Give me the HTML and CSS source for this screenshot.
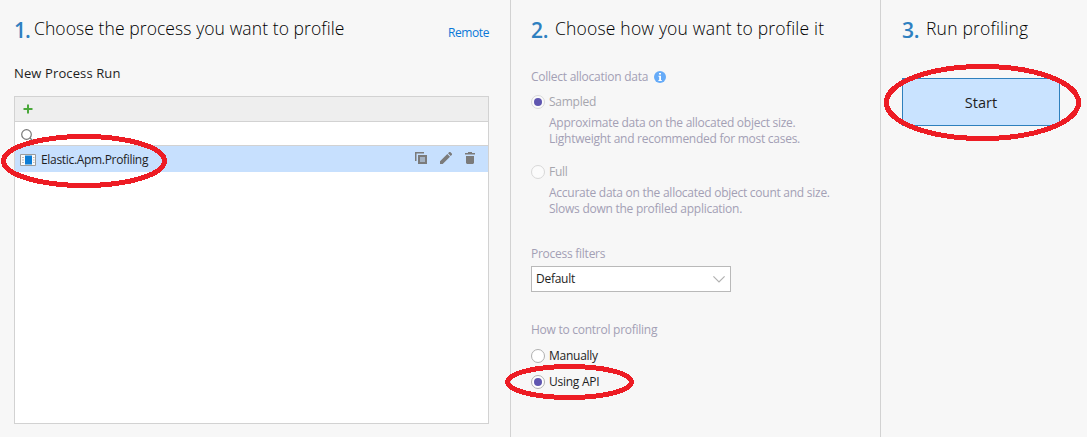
FILE: index.html
```html
<!DOCTYPE html>
<html lang="en">
<head>
<meta charset="utf-8">
<title>Profiling</title>
<link rel="stylesheet" href="styles.css">
</head>
<body>
<main class="app">
  <section class="panel process">
    <header class="heading"><b class="num">1.</b><h1 class="title t1">Choose the process you want to profile</h1><a class="remote">Remote</a></header>
    <h2 class="subtitle">New Process Run</h2>
    <div class="list">
      <div class="toolbar"><svg width="10" height="10" viewBox="0 0 10 10"><path d="M5 .5v9M.5 5h9" stroke="#4aa83a" stroke-width="2"/></svg></div>
      <div class="search"><svg width="14" height="14" viewBox="0 0 14 14" fill="none" stroke="#777" stroke-width="1.2"><circle cx="5.5" cy="5.5" r="4.8"/><path d="M9 9l4 4"/></svg></div>
      <div class="row">
        <svg width="16" height="12" viewBox="0 0 16 12"><path d="M.5.5h15v11H.5z" fill="#fafafa" stroke="#9b9b9b"/><path d="M2 3.5h2m-2 2.500h2m-2 2.500h2m9-5h1.500m-1.500 2.500h1.500m-1.500 2.500h1.500" stroke="#bbb"/><path d="M5 1.500h7v9H5z" fill="#0c7cd5"/></svg>
        <span class="name">Elastic.Apm.Profiling</span>
        <span class="actions">
          <svg width="12" height="12" viewBox="0 0 12 12"><path d="M.75 9V.75H9" fill="none" stroke="#7b7b7b" stroke-width="1.500"/><path d="M3 3h9v9H3z" fill="#7b7b7b"/><path d="M5 5h5v5H5z" fill="#a3b1c2"/></svg>
          <svg width="12" height="12" viewBox="0 0 12 12" fill="#7b7b7b"><path d="M0 12V9.300L7.300 2 10 4.700 2.700 12zM8 1.300L9.300 0h1L12 1.700v1L10.700 4z"/></svg>
          <svg width="10" height="12" viewBox="0 0 10 12" fill="#7b7b7b"><path d="M0 1h3V0h4v1h3v1.500H0zM1 4h8v7l-1 1H2l-1-1z"/></svg>
        </span>
      </div>
    </div>
  </section>
  <section class="panel options">
    <header class="heading"><b class="num">2.</b><h1 class="title t2">Choose how you want to profile it</h1></header>
    <div class="label collect"><span>Collect allocation data</span><svg width="12" height="12" viewBox="0 0 12 12"><circle cx="6" cy="6" r="6" fill="#66abf8"/><path d="M5 2h2v1.500H5zM4.500 4.700H7V9h.8v1H4.400V9h.8V5.700h-.7z" fill="#fff"/></svg></div>
    <div class="radio sampled off"><i class="dot on"></i><span>Sampled</span></div>
    <p class="desc"><span>Approximate data on the allocated object size.</span><span>Lightweight and recommended for most cases.</span></p>
    <div class="radio full off"><i class="dot"></i><span>Full</span></div>
    <p class="desc"><span>Accurate data on the allocated object count and size.</span><span>Slows down the profiled application.</span></p>
    <div class="label filters">Process filters</div>
    <div class="select"><span>Default</span><svg width="12" height="7" viewBox="0 0 12 7" fill="none" stroke="#b2b2b2" stroke-width="1.200"><path d="M.4.4L6 6 11.600.4"/></svg></div>
    <div class="label control">How to control profiling</div>
    <div class="radio manual"><i class="dot"></i><span>Manually</span></div>
    <div class="radio api"><i class="dot on"></i><span>Using API</span></div>
  </section>
  <section class="panel run">
    <header class="heading"><b class="num">3.</b><h1 class="title t3">Run profiling</h1></header>
    <button class="start">Start</button>
  </section>
  <svg class="marks" width="1087" height="437" viewBox="0 0 1087 437" fill="none" stroke="#ed1c24" stroke-width="5" shape-rendering="crispEdges">
    <ellipse cx="84" cy="161" rx="80.500" ry="24.500"/>
    <ellipse cx="569.500" cy="382" rx="62" ry="15.500"/>
    <ellipse cx="982.500" cy="102.500" rx="96" ry="36"/>
  </svg>
</main>
</body>
</html>
```
FILE: styles.css
```css
* { box-sizing: border-box; }
body { margin: 0; background: #f7f7f7; color: #1e1e1e; font: 12px/16px "Open Sans", "Noto Sans", sans-serif; letter-spacing: -0.260px; overflow: hidden; }
h1, h2, p { margin: 0; font-weight: 400; }
svg { display: block; flex: none; }
.app { position: relative; display: grid; grid-template-columns: 510px 370px 207px; height: 437px; white-space: nowrap; }
.panel { padding-top: 16px; }
.process { padding-left: 14px; padding-right: 21px; }
.options { border-left: 1px solid #d2d2d2; padding-left: 20px; }
.run { border-left: 1px solid #d2d2d2; padding-left: 21px; }
.heading { display: flex; height: 27px; }
.num { width: 20px; font-size: 21px; line-height: 28px; font-weight: 600; color: #2f80c0; letter-spacing: -1px; }
.options .num, .run .num { width: 24px; letter-spacing: -0.300px; }
.title { font-size: 17.500px; line-height: 24px; font-weight: 300; color: #000; }
.t1 { letter-spacing: 0.080px; }
.t2 { letter-spacing: 0.190px; }
.t3 { letter-spacing: 0.200px; }
.remote { margin-left: auto; padding-top: 9px; color: #0a78d7; letter-spacing: -0.400px; }
.subtitle { margin-top: 20px; font-size: 13px; line-height: 20px; letter-spacing: 0.120px; }
.list { margin-top: 13px; height: 328px; background: #fff; border: 1px solid #d2d2d2; }
.toolbar { height: 25px; padding: 7px 8px; background: #eee; border-bottom: 1px solid #d2d2d2; }
.search { height: 24px; padding: 7px 6px; border-bottom: 1px solid #d2d2d2; }
.row { display: flex; align-items: center; height: 26px; padding: 1px 13px 0 5px; background: #c7e0fe; }
.name { margin-left: 5px; letter-spacing: -0.320px; }
.actions { display: flex; gap: 13px; margin-left: auto; padding-bottom: 3px; }
.label { color: #a3a0b5; height: 16px; }
.collect { display: flex; align-items: center; gap: 6px; margin-top: 26px; }
.radio { display: flex; align-items: center; gap: 4px; height: 16px; }
.off { color: #a6a6ae; }
.dot { display: grid; place-items: center; width: 14px; height: 14px; border: 1px solid #b0b0b0; border-radius: 50%; background: #fff; }
.off .dot { border-color: #d8d8d8; background: #fbfbfb; }
.on::before { content: ""; width: 8px; height: 8px; border-radius: 50%; background: #5f56b0; }
.sampled { margin-top: 9px; }
.desc { display: grid; padding: 5px 0 0 18px; color: #a3a0b5; }
.full { margin-top: 17px; }
.filters { margin-top: 29px; }
.select { display: flex; justify-content: space-between; align-items: center; width: 200px; height: 26px; margin-top: 4px; padding: 0 5px 0 4px; background: #fff; border: 1px solid #b9b9b9; }
.control { margin-top: 30px; }
.manual { margin-top: 10px; }
.api { margin-top: 10px; }
.start { display: block; width: 158px; height: 48px; margin-top: 35px; padding: 1px 0 0; background: #c9e3ff; border: 1px solid #2e80bd; color: #1e1e1e; font: 14.500px "Open Sans", sans-serif; }
.marks { position: absolute; inset: 0; }
```
